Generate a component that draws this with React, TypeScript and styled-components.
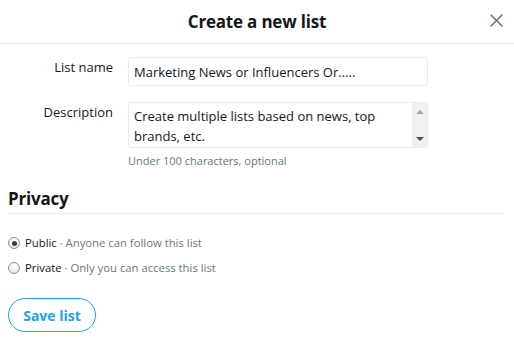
import React from 'react';
import styled, { createGlobalStyle } from 'styled-components';

const GlobalStyle = createGlobalStyle`
  html, body {
    margin: 0;
    padding: 0;
    background: #ffffff;
  }
  body {
    font-family: 'Open Sans', 'Noto Sans', sans-serif;
    color: #14171a;
  }
  * {
    box-sizing: border-box;
  }
`;

const Dialog = styled.div`
  width: 514px;
  height: 342px;
  background: #fff;
  overflow: hidden;
`;

const Header = styled.div`
  height: 44px;
  display: flex;
  align-items: center;
  justify-content: center;
  border-bottom: 1px solid #e6ecf0;
  position: relative;
`;

const Title = styled.h2`
  margin: 0;
  font-size: 17px;
  font-weight: 700;
  letter-spacing: -0.2px;
`;

const CloseButton = styled.button`
  position: absolute;
  right: 11px;
  top: 13px;
  width: 14px;
  height: 14px;
  padding: 0;
  border: none;
  background: none;
  display: flex;
  align-items: center;
  justify-content: center;
  cursor: pointer;
`;

const Form = styled.div`
  padding: 13px 8px 0 8px;
  display: flex;
  flex-direction: column;
`;

const Row = styled.div<{ $gap?: number }>`
  display: grid;
  grid-template-columns: 105px 300px;
  column-gap: 15px;
  align-items: start;
  margin-bottom: ${(p) => p.$gap ?? 0}px;
`;

const Label = styled.label`
  text-align: right;
  font-size: 13px;
  line-height: 18px;
  padding-top: 1px;
  color: #14171a;
`;

const TextInput = styled.input`
  height: 29px;
  border: 1px solid #e6ecf0;
  border-radius: 3px;
  padding: 0 5px;
  font-family: inherit;
  font-size: 13px;
  color: #14171a;
  outline: none;
`;

const AreaBox = styled.div`
  height: 46px;
  border: 1px solid #e6ecf0;
  border-radius: 3px;
  display: flex;
  overflow: hidden;
`;

const Area = styled.textarea`
  flex: 1;
  border: none;
  resize: none;
  outline: none;
  padding: 3px 5px;
  font-family: inherit;
  font-size: 13px;
  line-height: 20px;
  color: #14171a;
  overflow: hidden;
`;

const Scrollbar = styled.div`
  width: 15px;
  background: #f1f1f1;
  display: flex;
  flex-direction: column;
  justify-content: space-between;
  align-items: center;
  padding: 7px 0 6px;
`;

const Arrow = styled.span<{ $down?: boolean; $dim?: boolean }>`
  width: 0;
  height: 0;
  border-left: 4px solid transparent;
  border-right: 4px solid transparent;
  ${(p) =>
    p.$down
      ? `border-top: 4px solid ${p.$dim ? '#a3a3a3' : '#505050'};`
      : `border-bottom: 4px solid ${p.$dim ? '#a3a3a3' : '#505050'};`}
`;

const Helper = styled.div`
  grid-column: 2;
  font-size: 11px;
  line-height: 16px;
  margin-top: 5px;
  color: #657786;
`;

const SectionTitle = styled.h3`
  margin: 18px 0 0 0;
  font-size: 17px;
  font-weight: 700;
  line-height: 24px;
  padding-bottom: 2px;
  border-bottom: 1px solid #e6ecf0;
  width: 496px;
  letter-spacing: -0.2px;
`;

const Options = styled.div`
  display: flex;
  flex-direction: column;
  gap: 7px;
  margin-top: 20px;
`;

const Option = styled.label`
  display: flex;
  align-items: center;
  gap: 5px;
  font-size: 11.3px;
  line-height: 18px;
  color: #14171a;
`;

const Radio = styled.span<{ $checked?: boolean }>`
  width: 12px;
  height: 12px;
  border-radius: 50%;
  border: 1px solid #8f8f8f;
  background: radial-gradient(circle at 50% 30%, #ffffff 0%, #e8e8e8 70%, #d8d8d8 100%);
  display: flex;
  align-items: center;
  justify-content: center;
  &::after {
    content: '';
    width: 5px;
    height: 5px;
    border-radius: 50%;
    background: ${(p) => (p.$checked ? '#3a3a3a' : 'transparent')};
  }
`;

const Muted = styled.span`
  color: #657786;
`;

const SaveButton = styled.button`
  margin-top: 21px;
  align-self: flex-start;
  width: 88px;
  height: 34px;
  border: 1px solid #1da1f2;
  border-radius: 17px;
  background: #fff;
  color: #1da1f2;
  font-family: inherit;
  font-size: 14px;
  font-weight: 700;
  cursor: pointer;
`;

const CloseIcon = () => (
  <svg width="13" height="13" viewBox="0 0 13 13">
    <path d="M1 1 L12 12 M12 1 L1 12" stroke="#657786" strokeWidth="1.6" strokeLinecap="round" />
  </svg>
);

export default function App() {
  return (
    <>
      <GlobalStyle />
      <Dialog>
        <Header>
          <Title>Create a new list</Title>
          <CloseButton aria-label="Close">
            <CloseIcon />
          </CloseButton>
        </Header>
        <Form>
          <Row $gap={16}>
            <Label>List name</Label>
            <TextInput defaultValue="Marketing News or Influencers Or....." />
          </Row>
          <Row>
            <Label>Description</Label>
            <AreaBox>
              <Area defaultValue="Create multiple lists based on news, top brands, etc." />
              <Scrollbar>
                <Arrow $dim />
                <Arrow $down />
              </Scrollbar>
            </AreaBox>
            <Helper>Under 100 characters, optional</Helper>
          </Row>
          <SectionTitle>Privacy</SectionTitle>
          <Options>
            <Option>
              <Radio $checked />
              <span>
                Public <Muted>· Anyone can follow this list</Muted>
              </span>
            </Option>
            <Option>
              <Radio />
              <span>
                Private <Muted>· Only you can access this list</Muted>
              </span>
            </Option>
          </Options>
          <SaveButton>Save list</SaveButton>
        </Form>
      </Dialog>
    </>
  );
}
